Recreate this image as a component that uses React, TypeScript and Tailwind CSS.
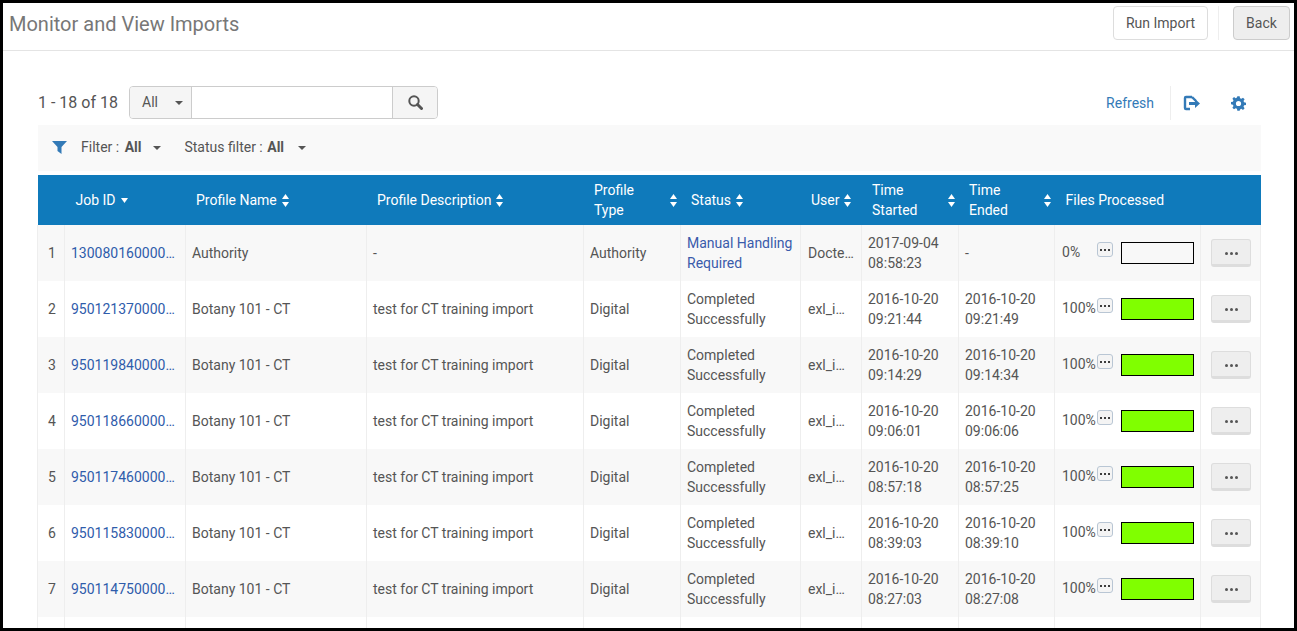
import React from 'react';

interface Job {
  id: string;
  name: string;
  desc: string;
  type: string;
  status: string[];
  user: string;
  started: string[];
  ended: string[];
  pct: number;
}

const ct = (id: string, started: string, ended: string): Job => ({
  id,
  name: 'Botany 101 - CT',
  desc: 'test for CT training import',
  type: 'Digital',
  status: ['Completed', 'Successfully'],
  user: 'exl_i…',
  started: ['2016-10-20', started],
  ended: ['2016-10-20', ended],
  pct: 100,
});

const jobs: Job[] = [
  {
    id: '130080160000…',
    name: 'Authority',
    desc: '-',
    type: 'Authority',
    status: ['Manual Handling', 'Required'],
    user: 'Docte…',
    started: ['2017-09-04', '08:58:23'],
    ended: ['-'],
    pct: 0,
  },
  ct('950121370000…', '09:21:44', '09:21:49'),
  ct('950119840000…', '09:14:29', '09:14:34'),
  ct('950118660000…', '09:06:01', '09:06:06'),
  ct('950117460000…', '08:57:18', '08:57:25'),
  ct('950115830000…', '08:39:03', '08:39:10'),
  ct('950114750000…', '08:27:03', '08:27:08'),
];

const widths = [27, 121, 181, 217, 97, 120, 61, 97, 96, 146, 60];

function Sort() {
  return (
    <svg width="7" height="15" viewBox="0 0 7 15" className="shrink-0 fill-white">
      <path d="M3.500 1 7 6H0z" />
      <path d="M3.500 14 7 9H0z" />
    </svg>
  );
}

function Caret() {
  return <span className="block w-0 h-0 border-x-[4px] border-x-transparent border-t-[4px] border-t-[#555]" />;
}

function Dots({ size }: { size: number }) {
  return (
    <svg width={size * 3 + 4} height={size} viewBox={`0 0 ${size * 3 + 4} ${size}`} className="fill-current">
      <circle cx={size / 2} cy={size / 2} r={size / 2} />
      <circle cx={size * 1.5 + 2} cy={size / 2} r={size / 2} />
      <circle cx={size * 2.5 + 4} cy={size / 2} r={size / 2} />
    </svg>
  );
}

function Head({ label, lines }: { label?: string; lines?: string[] }) {
  return (
    <th className={`pl-[10.5px] font-normal text-left text-white ${lines ? 'pr-[4px]' : 'pr-2'}`}>
      {lines ? (
        <div className="flex items-center justify-between">
          <div className="leading-[20px]">
            {lines.map(l => (
              <div key={l}>{l}</div>
            ))}
          </div>
          <Sort />
        </div>
      ) : (
        <div className="flex items-center gap-[5px] whitespace-nowrap">
          {label}
          <Sort />
        </div>
      )}
    </th>
  );
}

export default function App() {
  return (
    <div className="w-[1297px] h-[631px] border-[3px] border-black bg-white overflow-hidden text-[14px] text-[#555] font-['Roboto',sans-serif]">
      <header className="h-[48px] border-b border-[#e4e4e4] flex items-start justify-between pl-[6px] pr-1">
        <h1 className="text-[20px] leading-[43px] text-[#777]">Monitor and View Imports</h1>
        <div className="flex items-center pt-[3px]">
          <button className="w-[95px] h-[34px] rounded border border-[#ddd] bg-white">Run Import</button>
          <span className="w-px h-[34px] bg-[#eee] ml-[10px] mr-[14px]" />
          <button className="w-[57px] h-[34px] rounded border border-[#ccc] bg-[#eee]">Back</button>
        </div>
      </header>

      <main className="pl-[35px] pr-[33px]">
        <div className="h-[74px] flex items-end justify-between pb-[6px]">
          <div className="flex items-center">
            <span className="text-[16px] w-[91px]">1 - 18 of 18</span>
            <div className="w-[309px] h-[33px] flex rounded border border-[#ccc] overflow-hidden">
              <div className="w-[62px] flex items-center gap-[17px] pl-[12px] bg-[#f5f5f5] border-r border-[#ccc]">
                All <Caret />
              </div>
              <div className="flex-1 bg-white" />
              <div className="w-[45px] flex items-center justify-center bg-[#f5f5f5] border-l border-[#ccc]">
                <svg width="15" height="15" viewBox="0 0 15 15" fill="none" stroke="#555">
                  <circle cx="6" cy="6" r="4.700" strokeWidth="2" />
                  <path d="M9.500 9.500 13.500 13.500" strokeWidth="3" strokeLinecap="round" />
                </svg>
              </div>
            </div>
          </div>
          <div className="flex items-center h-[34px] text-[#337ab7] mr-[15px] -mb-px">
            <span>Refresh</span>
            <span className="w-px h-[34px] bg-[#eee] ml-[16px] mr-[13px]" />
            <svg width="17" height="16" viewBox="0 0 17 16" className="mr-[31px] -ml-px">
              <path d="M9 2H3a1 1 0 0 0-1 1v10a1 1 0 0 0 1 1h4" fill="none" stroke="#337ab7" strokeWidth="2.4" />
              <path d="M9 2l4 4" fill="none" stroke="#337ab7" strokeWidth="2.4" />
              <path d="M6 7h6V4l5 4.500-5 4.500v-3H6z" fill="#337ab7" />
            </svg>
            <svg width="15" height="15" viewBox="-1 0 26 25" fill="#337ab7" className="mt-[1px]">
              <path d="M10 0h4l.7 3.300 2.300 1L19.800 2.500l2.800 2.800L20.700 8l1 2.300 3.300.7v4l-3.300.7-1 2.300 1.900 2.800-2.800 2.800-2.800-1.900-2.300 1L14 25h-4l-.7-3.300-2.300-1-2.800 1.900-2.800-2.800L3.300 17l-1-2.300L-1 14v-4l3.300-.7 1-2.300-1.900-2.800 2.800-2.800L7 3.300l2.300-1zM12 8a4.500 4.500 0 1 0 0 9 4.500 4.500 0 0 0 0-9z" fillRule="evenodd" />
            </svg>
          </div>
        </div>

        <div className="h-[46px] bg-[#f9f9f9] flex items-center pl-[14px] pb-[1px]">
          <svg width="15" height="13" viewBox="0 0 15 13" className="mr-[14px]">
            <path d="M0 0h15L9.500 6v7L5.500 10V6z" fill="#337ab7" />
          </svg>
          <span>Filter : <b className="font-bold ml-[2px]">All</b></span>
          <span className="ml-[12px] mr-[23px]"><Caret /></span>
          <span>Status filter : <b className="font-bold ml-[1px]">All</b></span>
          <span className="ml-[14px]"><Caret /></span>
        </div>

        <table className="mt-[4px] -ml-px table-fixed border-collapse w-[1223px]">
          <colgroup>
            {widths.map((w, i) => (
              <col key={i} style={{ width: w }} />
            ))}
          </colgroup>
          <thead>
            <tr className="h-[50px] bg-[#0f7abb]">
              <th />
              <th className="pl-[11px] font-normal text-left text-white whitespace-nowrap">
                <div className="flex items-center gap-[5px]">
                  Job ID
                  <svg width="7" height="5" viewBox="0 0 7 5" className="fill-white">
                    <path d="M0 0h7L3.500 5z" />
                  </svg>
                </div>
              </th>
              <Head label="Profile Name" />
              <Head label="Profile Description" />
              <Head lines={['Profile', 'Type']} />
              <Head label="Status" />
              <Head label="User" />
              <Head lines={['Time', 'Started']} />
              <Head lines={['Time', 'Ended']} />
              <th className="pl-[11px] font-normal text-left text-white whitespace-nowrap">Files Processed</th>
              <th />
            </tr>
          </thead>
          <tbody>
            {jobs.map((j, i) => (
              <tr key={j.id} className={`h-[56px] leading-[20px] ${i % 2 === 0 ? 'bg-[#f8f8f8]' : 'bg-white'} [&>td]:border [&>td]:border-y-0 [&>td]:border-[#eee] [&>td]:pl-[6px]`}>
                <td className="text-center !pl-[2px]">{i + 1}</td>
                <td className="text-[#2f5cab] whitespace-nowrap">{j.id}</td>
                <td>{j.name}</td>
                <td>{j.desc}</td>
                <td>{j.type}</td>
                <td className={j.pct === 0 ? 'text-[#3a5bab]' : ''}>
                  {j.status.map(s => (
                    <div key={s} className="whitespace-nowrap">{s}</div>
                  ))}
                </td>
                <td className="whitespace-nowrap !pl-[7px]">{j.user}</td>
                <td>
                  {j.started.map(s => (
                    <div key={s}>{s}</div>
                  ))}
                </td>
                <td>
                  {j.ended.map(s => (
                    <div key={s}>{s}</div>
                  ))}
                </td>
                <td className="!pl-[7px]">
                  <div className="flex items-start h-[26px]">
                    <span className="w-[35px] pt-[2px]">{j.pct}%</span>
                    <span className="w-[16px] h-[15px] mt-[2px] rounded-[3px] border border-[#b9c6d4] bg-[#f4f4f4] flex items-center justify-center text-black">
                      <Dots size={2} />
                    </span>
                    <div className={`w-[73px] h-[22px] ml-[8px] mt-[2px] border border-black ${j.pct === 100 ? 'bg-[#80ff00]' : 'bg-transparent'}`} />
                  </div>
                </td>
                <td>
                  <button className="ml-[4px] w-[40px] h-[28px] pt-[2px] rounded-[3px] border border-[#ddd] border-b-[3px] bg-[#eee] flex items-center justify-center text-[#555]">
                    <Dots size={3} />
                  </button>
                </td>
              </tr>
            ))}
            <tr className="h-[56px] bg-white [&>td]:border [&>td]:border-y-0 [&>td]:border-[#eee]">
              {widths.map((_, i) => (
                <td key={i} />
              ))}
            </tr>
          </tbody>
        </table>
      </main>
    </div>
  );
}
